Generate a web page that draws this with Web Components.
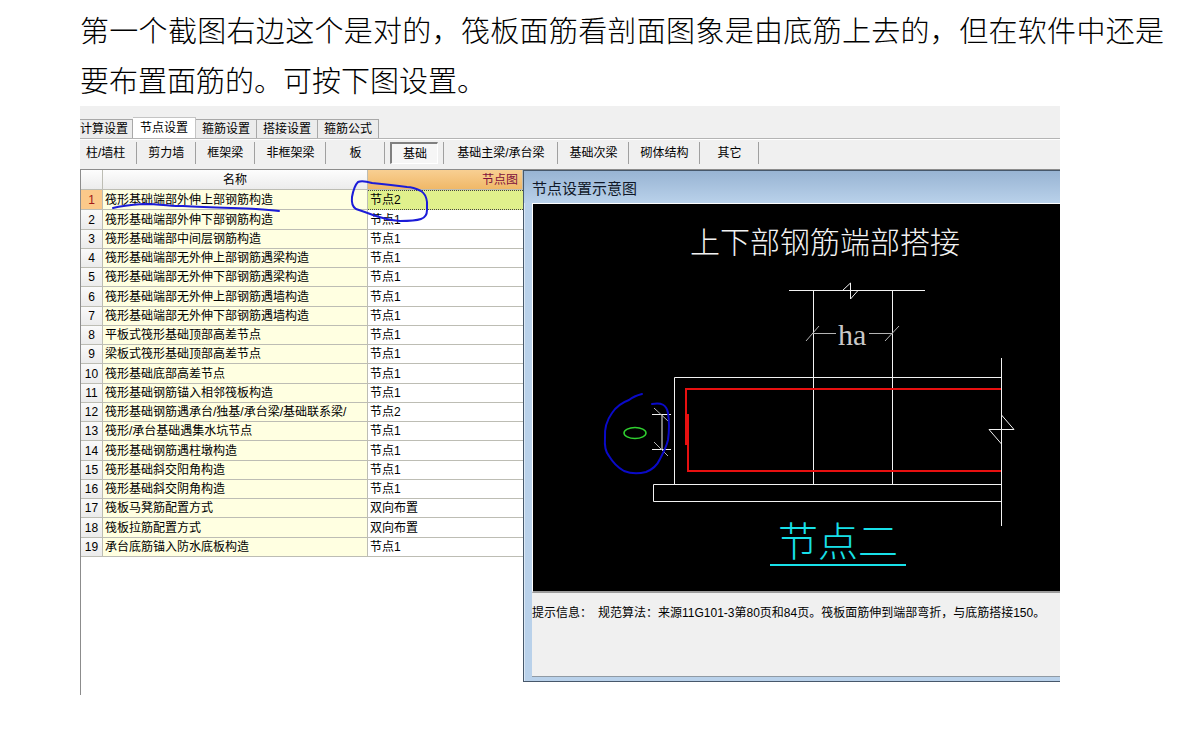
<!DOCTYPE html>
<html lang="zh-CN">
<head>
<meta charset="utf-8">
<title>节点设置</title>
<style>
  body { margin: 0; background: #fff; color: #000; font-family: "Liberation Sans", "Noto Sans CJK SC", sans-serif; }
</style>
</head>
<body>
<answer-page></answer-page>

<template id="answer-page">
  <style>
    :host { display: block; padding: 4px 18px 54px 80px; }
    settings-panel { margin: 2px 104px 0 0; }
  </style>
  <answer-note>第一个截图右边这个是对的，筏板面筋看剖面图象是由底筋上去的，但在软件中还是要布置面筋的。可按下图设置。</answer-note>
  <settings-panel>
    <tab-strip slot="tabs"></tab-strip>
    <member-bar slot="bar"></member-bar>
    <node-table slot="table"></node-table>
    <preview-window slot="preview" heading="节点设置示意图">
      <node-drawing slot="drawing"></node-drawing>
      <span slot="label">提示信息：</span>
      <span slot="hint">规范算法：来源11G101-3第80页和84页。筏板面筋伸到端部弯折，与底筋搭接150。</span>
    </preview-window>
  </settings-panel>
</template>

<template id="answer-note">
  <style>
    :host { display: block; }
    p { margin: 0; font: 300 29px/50px "Noto Sans CJK SC", sans-serif; text-align: justify; }
  </style>
  <p><slot></slot></p>
</template>

<template id="settings-panel">
  <style>
    :host { display: block; background: #f0f0f0; }
    .work { display: flex; align-items: flex-start; background: #fff; border-top: 1px solid #8c8c8c; border-left: 1px solid #8c8c8c; padding-bottom: 13px; }
    .table { flex: 0 0 442px; }
    .preview { flex: 1; min-width: 0; }
  </style>
  <slot name="tabs"></slot>
  <slot name="bar"></slot>
  <div class="work">
    <div class="table"><slot name="table"></slot></div>
    <div class="preview"><slot name="preview"></slot></div>
  </div>
</template>

<template id="tab-strip">
  <style>
    :host { display: flex; align-items: flex-end; padding-top: 11px; border-bottom: 1px solid #b4b4b4; }
    button { height: 19px; margin: 0; padding: 0 6px; border: 1px solid #a8a8a8; border-left: 0; border-bottom: 0; background: #ececec; font: inherit; font-size: 12px; line-height: 18px; color: #000; white-space: nowrap; }
    button:first-of-type { padding: 0 4px 0 0; }
    button.on { height: 21px; padding: 0 7px; background: #fff; border-color: #c4c4c4; }
  </style>
  <button>计算设置</button><button class="on">节点设置</button><button>箍筋设置</button><button>搭接设置</button><button>箍筋公式</button>
</template>

<template id="member-bar">
  <style>
    :host { display: flex; align-items: center; height: 30px; border-top: 1px solid #fff; box-sizing: border-box; padding-bottom: 4px; }
    .item { display: flex; justify-content: center; box-sizing: border-box; min-width: 59px; height: 22px; padding: 0 11px; border-right: 1px solid #a0a0a0; }
    .item:first-of-type { min-width: 0; padding: 0 11px 0 6px; }
    .item.wide { min-width: 114px; }
    button { margin: 0; padding: 0; border: 0; background: none; font: inherit; font-size: 12px; line-height: 22px; color: #000; white-space: nowrap; }
    .item.on { padding: 0 5px; }
    .on button { flex: 1; line-height: 20px; border: 1px solid #fff; border-top: 2px solid #808080; border-left: 2px solid #808080; background: #f6f6f6; }
  </style>
  <div class="item"><button>柱/墙柱</button></div>
  <div class="item"><button>剪力墙</button></div>
  <div class="item"><button>框架梁</button></div>
  <div class="item"><button>非框架梁</button></div>
  <div class="item"><button>板</button></div>
  <div class="item on"><button>基础</button></div>
  <div class="item wide"><button>基础主梁/承台梁</button></div>
  <div class="item"><button>基础次梁</button></div>
  <div class="item"><button>砌体结构</button></div>
  <div class="item"><button>其它</button></div>
</template>

<template id="node-table">
  <style>
    :host { display: block; position: relative; }
    table { width: 100%; height: 387px; table-layout: fixed; border-collapse: separate; border-spacing: 0; font-size: 12px; line-height: 16px; }
    th, td { padding: 0 2px; border: 0 solid #bdbdb4; border-width: 0 1px 1px 0; font-weight: 400; text-align: left; white-space: nowrap; overflow: hidden; }
    thead th { height: 19px; background: linear-gradient(#fdfdfd, #ececec); text-align: center; }
    thead th.picked { background: linear-gradient(#f8cf92, #f0b868); color: #80103c; text-align: right; padding-right: 4px; }
    tbody th { background: linear-gradient(#fafafa, #ebebeb); text-align: center; padding: 0; }
    tbody td { background: #ffffe1; }
    tbody td:last-child { background: #fff; border-right: 0; }
    tbody tr:first-child th { background: #fbc98a; color: #a01818; }
    tbody tr:first-child td:last-child { background: #e0f08c; border-top: 1px dotted #444; border-bottom: 1px dotted #444; }
    .no { width: 22px; } .name { width: 265px; }
    svg { position: absolute; left: 0; top: 0; width: 100%; height: 60px; fill: none; stroke: #1c1cd8; stroke-width: 2; stroke-linecap: round; }
  </style>
  <table>
    <colgroup><col class="no"><col class="name"><col></colgroup>
    <thead><tr><th></th><th scope="col">名称</th><th scope="col" class="picked">节点图</th></tr></thead>
    <tbody></tbody>
  </table>
  <svg viewBox="81 170 442 60" preserveAspectRatio="xMinYMin meet" aria-hidden="true">
    <path d="M113 208C121 206 130 205 143 204C160 204 171 206 183 206C211 208 240 208 256 209Q270 210 279 211"/>
    <path d="M372 183Q362 180 358 182Q354 186 352 197Q351 206 356 209Q365 212 373 215Q387 220 400 221Q415 221 421 219Q427 217 427 210V202Q426 194 421 191Q413 187 407 187Q392 185 372 183"/>
  </svg>
</template>

<template id="preview-window">
  <style>
    :host { display: block; }
    .frame { border: 1px solid #47586b; border-right: 0; padding: 0 0 4px 8px; background: #b9d1ea; box-shadow: inset 1px 1px #dbe8f5; }
    header { margin-left: -8px; padding: 4px 8px 0; height: 28px; line-height: 28px; font-size: 15px; background: linear-gradient(#98b4d3, #b9d1ea); color: #101828; white-space: nowrap; }
    .canvas { border-top: 1px solid #fff; border-left: 1px solid #fff; border-bottom: 2px solid #9c9c9c; background: #000; overflow: hidden; }
    .hint { display: flex; gap: 6px; box-sizing: border-box; min-height: 84px; padding-top: 11px; background: #f0f0f0; border-bottom: 1px solid #909aa4; font-size: 12px; line-height: 18px; white-space: nowrap; }
  </style>
  <section class="frame">
    <header></header>
    <div class="canvas"><slot name="drawing"></slot></div>
    <div class="hint"><slot name="label"></slot><slot name="hint"></slot></div>
  </section>
</template>

<template id="node-drawing">
  <style>
    :host { display: block; }
    svg { display: block; width: 100%; height: 387px; fill: none; stroke: #f2f2f2; stroke-width: 1; }
    text { stroke: none; fill: #f2f2f2; font-family: "Noto Sans CJK SC", sans-serif; font-weight: 300; font-size: 30px; }
    text.latin { font-family: "Liberation Serif", serif; font-weight: 400; fill: #c8c8c8; }
    text.caption { font-size: 40px; fill: #18e0e8; }
    .dim { stroke: #b4b4b4; }
    .bar { stroke: #e81010; stroke-width: 2; }
    .pen { stroke: #0a0ac8; stroke-width: 2; stroke-linecap: round; }
  </style>
  <svg viewBox="533 204 527 387" preserveAspectRatio="xMinYMin meet">
    <text x="690" y="253">上下部钢筋端部搭接</text>
    <path d="M789 290.500H842.500L850.500 283V299L858 290.500H925M842 290.500H858M813.500 290V484M892.500 290V484"/>
    <path class="dim" d="M813 333.500H836M869 333.500H893M806 341L819 326M885 341L899 326"/>
    <text class="latin" x="838" y="345">ha</text>
    <path d="M1001 377.500H674.500V484M1001 484.500H653.500V501.500H1001M1001.500 358V526M1001.500 415L1014 429.500H989L1001.500 444"/>
    <path class="bar" d="M1001 389H686V445M688 414V471H1001"/>
    <path d="M652 414.500H671M652 449.500H671M662 415V449"/>
    <path class="dim" d="M654 408L668 421M654 442L668 456"/>
    <ellipse cx="635" cy="433" rx="11" ry="5.500" stroke="#30d030" stroke-width="1.500"/>
    <path class="pen" d="M642 394Q634 396 629 400Q618 404 612 413Q604 424 605 438Q604 450 609 456Q615 466 624 471Q634 475 646 472Q656 468 660 459Q666 448 668 440Q670 426 668 413Q666 401 652 404"/>
    <text class="caption" x="778" y="556">节点二</text>
    <path d="M770 565H906" stroke="#18e0e8" stroke-width="2"/>
  </svg>
</template>

<script>
  class TemplateElement extends HTMLElement {
    constructor() {
      super();
      this.attachShadow({ mode: "open" })
        .append(document.getElementById(this.localName).content.cloneNode(true));
    }
  }

  class NodeTable extends TemplateElement {
    static rows = [
      ["筏形基础端部外伸上部钢筋构造", "节点2"],
      ["筏形基础端部外伸下部钢筋构造", "节点1"],
      ["筏形基础端部中间层钢筋构造", "节点1"],
      ["筏形基础端部无外伸上部钢筋遇梁构造", "节点1"],
      ["筏形基础端部无外伸下部钢筋遇梁构造", "节点1"],
      ["筏形基础端部无外伸上部钢筋遇墙构造", "节点1"],
      ["筏形基础端部无外伸下部钢筋遇墙构造", "节点1"],
      ["平板式筏形基础顶部高差节点", "节点1"],
      ["梁板式筏形基础顶部高差节点", "节点1"],
      ["筏形基础底部高差节点", "节点1"],
      ["筏形基础钢筋锚入相邻筏板构造", "节点1"],
      ["筏形基础钢筋遇承台/独基/承台梁/基础联系梁/", "节点2"],
      ["筏形/承台基础遇集水坑节点", "节点1"],
      ["筏形基础钢筋遇柱墩构造", "节点1"],
      ["筏形基础斜交阳角构造", "节点1"],
      ["筏形基础斜交阴角构造", "节点1"],
      ["筏板马凳筋配置方式", "双向布置"],
      ["筏板拉筋配置方式", "双向布置"],
      ["承台底筋锚入防水底板构造", "节点1"]
    ];
    constructor() {
      super();
      const body = this.shadowRoot.querySelector("tbody");
      NodeTable.rows.forEach(([name, node], i) => {
        const row = body.insertRow();
        const no = document.createElement("th");
        no.scope = "row";
        no.textContent = i + 1;
        row.append(no);
        row.insertCell().textContent = name;
        row.insertCell().textContent = node;
      });
    }
  }

  class PreviewWindow extends TemplateElement {
    connectedCallback() {
      this.shadowRoot.querySelector("header").textContent = this.getAttribute("heading");
    }
  }

  for (const name of ["answer-note", "settings-panel", "tab-strip", "member-bar", "node-drawing"])
    customElements.define(name, class extends TemplateElement {});
  customElements.define("node-table", NodeTable);
  customElements.define("preview-window", PreviewWindow);
  customElements.define("answer-page", class extends TemplateElement {});
</script>
</body>
</html>
